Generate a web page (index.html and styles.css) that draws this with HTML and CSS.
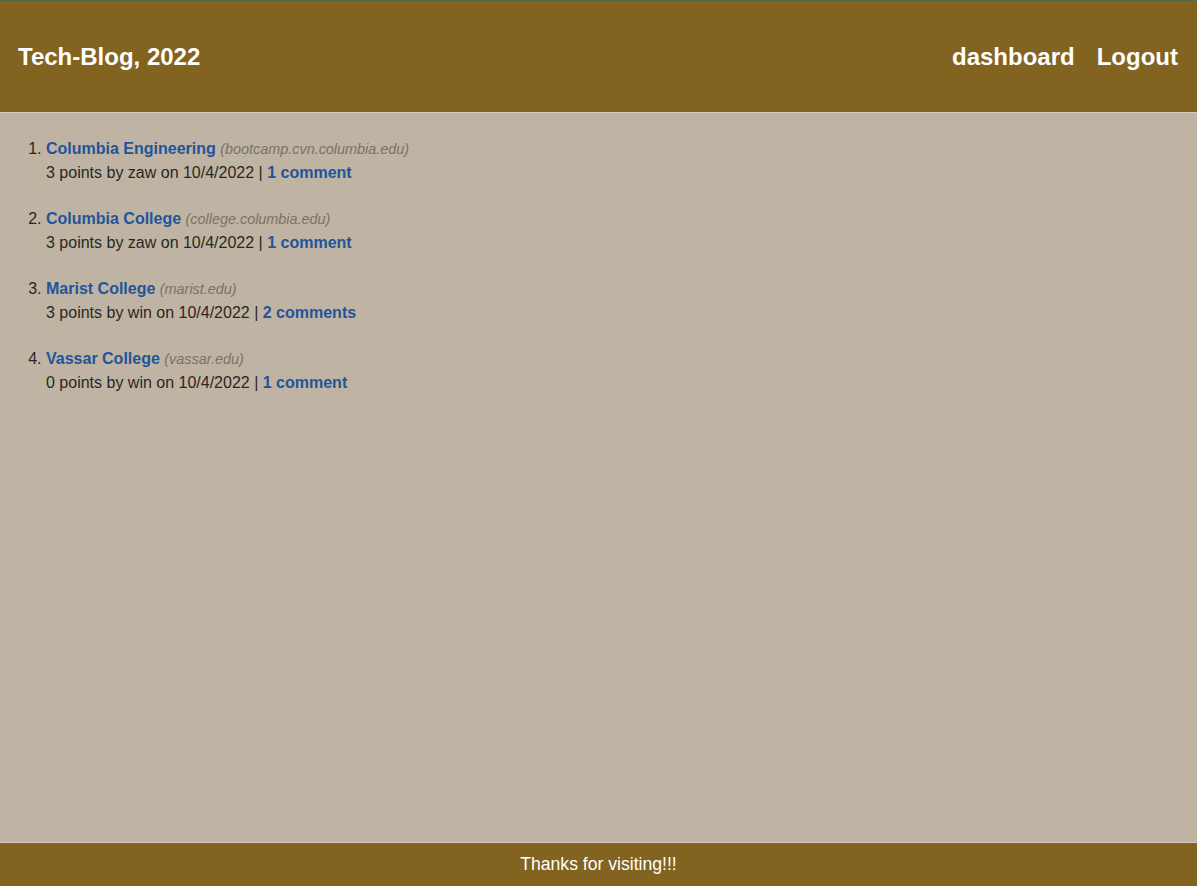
FILE: index.html
```html
<!DOCTYPE html>
<html lang="en">
<head>
<meta charset="utf-8">
<title>Tech-Blog, 2022</title>
<link rel="stylesheet" href="styles.css">
</head>
<body>
<header class="site-header">
  <h1 class="brand">Tech-Blog, 2022</h1>
  <nav class="nav">
    <a href="#" class="nav-link">dashboard</a>
    <a href="#" class="nav-link">Logout</a>
  </nav>
</header>
<main class="content">
  <ol class="posts">
    <li class="post">
      <a href="#" class="post-title">Columbia Engineering</a> <span class="post-url">(bootcamp.cvn.columbia.edu)</span><br>
      3 points by zaw on 10/4/2022 | <a href="#" class="post-comments">1 comment</a>
    </li>
    <li class="post">
      <a href="#" class="post-title">Columbia College</a> <span class="post-url">(college.columbia.edu)</span><br>
      3 points by zaw on 10/4/2022 | <a href="#" class="post-comments">1 comment</a>
    </li>
    <li class="post">
      <a href="#" class="post-title">Marist College</a> <span class="post-url">(marist.edu)</span><br>
      3 points by win on 10/4/2022 | <a href="#" class="post-comments">2 comments</a>
    </li>
    <li class="post">
      <a href="#" class="post-title">Vassar College</a> <span class="post-url">(vassar.edu)</span><br>
      0 points by win on 10/4/2022 | <a href="#" class="post-comments">1 comment</a>
    </li>
  </ol>
</main>
<footer class="site-footer">Thanks for visiting!!!</footer>
</body>
</html>
```
FILE: styles.css
```css
html, body {
  margin: 0;
  padding: 0;
  height: 100%;
}
body {
  font-family: "Liberation Sans", Arial, sans-serif;
  background: #bfb4a3;
  color: #2a2722;
  display: flex;
  flex-direction: column;
  min-height: 100vh;
}
.site-header {
  background: #826320;
  border-top: 1px solid #4f6b45;
  border-bottom: 1px solid #d3ccc2;
  height: 111px;
  box-sizing: content-box;
  display: flex;
  align-items: center;
  justify-content: space-between;
  padding: 0 19px 0 18px;
}
.brand {
  margin: 0;
  color: #fff;
  font-size: 24px;
  font-weight: bold;
}
.nav {
  display: flex;
  gap: 22px;
}
.nav-link {
  color: #fff;
  text-decoration: none;
  font-weight: bold;
  font-size: 24px;
}
.content {
  flex: 1;
}
.posts {
  margin: 24px 0 0;
  padding-left: 46px;
  font-size: 16px;
  line-height: 24px;
}
.post {
  margin-bottom: 22px;
}
.post-title, .post-comments {
  color: #22549a;
  font-weight: bold;
  text-decoration: none;
}
.post-url {
  color: #77726b;
  font-style: italic;
  font-size: 14.4px;
}
.site-footer {
  background: #826320;
  border-top: 1px solid #d3ccc2;
  height: 43px;
  display: flex;
  align-items: center;
  justify-content: center;
  color: #fff;
  font-size: 17.6px;
}
```
